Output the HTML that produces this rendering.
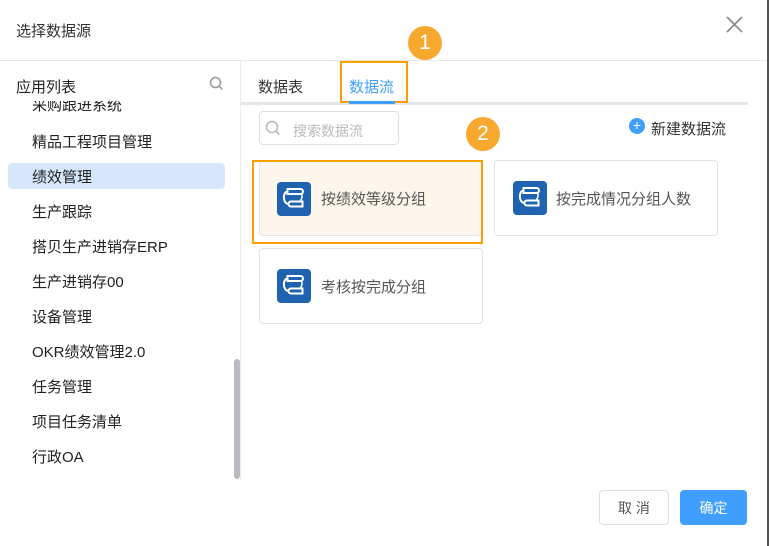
<!DOCTYPE html>
<html><head><meta charset="utf-8"><style>
*{margin:0;padding:0;box-sizing:border-box}
body{width:770px;height:546px;background:#fff;position:relative;overflow:hidden;font-family:"Liberation Sans","Noto Sans CJK SC",sans-serif;color:#333}
.a{position:absolute;white-space:nowrap}
.item{position:absolute;left:32px;font-size:15px;color:#222;line-height:20px}
.card{position:absolute;border:1px solid #e3e3e6;border-radius:4px;background:#fff}
.ic{position:absolute;width:34px;height:34px;background:#1f63b0;border-radius:4px}
.ct{position:absolute;font-size:15px;color:#555;line-height:20px}
.badge{position:absolute;width:34px;height:34px;border-radius:50%;background:#f7a92f;color:#fff;font-size:21px;text-align:center;line-height:34px}
</style></head><body>
<div class="a" style="left:16px;top:20px;font-size:15px;color:#333">选择数据源</div>
<svg class="a" style="left:726px;top:16px" width="17" height="17"><path d="M1 1L16 16M16 1L1 16" stroke="#888" stroke-width="1.6"/></svg>
<div class="a" style="left:0;top:60px;width:768px;height:1px;background:#e8e8ea"></div>
<div class="a" style="left:767px;top:0;width:2px;height:546px;background:#555"></div>
<!-- left panel -->
<div class="a" style="left:240px;top:61px;width:1px;height:420px;background:#ececee"></div>
<div class="a" style="left:16px;top:76px;font-size:15px;color:#222">应用列表</div>
<svg class="a" style="left:209px;top:76px" width="15" height="15"><circle cx="6.5" cy="6.5" r="5" stroke="#999" stroke-width="1.5" fill="none"/><path d="M10.5 10.5L13.5 13.5" stroke="#999" stroke-width="1.5"/></svg>
<div style="position:absolute;left:0;top:101px;width:240px;height:11px;overflow:hidden"><div class="item" style="top:-5px">采购跟进系统</div></div>
<div class="a" style="left:8px;top:163px;width:217px;height:26px;background:#d6e7fb;border-radius:4px"></div>
<div class="item" style="top:133px">精品工程项目管理</div>
<div class="item" style="top:168px">绩效管理</div>
<div class="item" style="top:203px">生产跟踪</div>
<div class="item" style="top:238px">搭贝生产进销存ERP</div>
<div class="item" style="top:273px">生产进销存00</div>
<div class="item" style="top:308px">设备管理</div>
<div class="item" style="top:343px">OKR绩效管理2.0</div>
<div class="item" style="top:378px">任务管理</div>
<div class="item" style="top:413px">项目任务清单</div>
<div class="item" style="top:448px">行政OA</div>
<div class="a" style="left:234px;top:359px;width:6px;height:120px;background:#b9b9bf;border-radius:3px"></div>
<!-- tabs -->
<div class="a" style="left:241px;top:102px;width:507px;height:3px;background:#e4e7ec"></div>
<div class="a" style="left:258px;top:76px;font-size:15px;color:#333">数据表</div>
<div class="a" style="left:340px;top:61px;width:68px;height:42px;border:2px solid #f7a000"></div>
<div class="a" style="left:349px;top:76px;font-size:15px;color:#409eff">数据流</div>
<div class="a" style="left:349px;top:101px;width:46px;height:3px;background:#409eff"></div>
<div class="badge" style="left:408px;top:26px">1</div>
<div class="badge" style="left:466px;top:117px">2</div>
<!-- search -->
<div class="a" style="left:259px;top:111px;width:140px;height:34px;border:1px solid #dcdfe6;border-radius:4px"></div>
<svg class="a" style="left:265px;top:120px" width="16" height="16"><circle cx="7" cy="7" r="5.5" stroke="#bbb" stroke-width="1.6" fill="none"/><path d="M11 11L14.5 14.5" stroke="#bbb" stroke-width="1.6"/></svg>
<div class="a" style="left:293px;top:121px;font-size:14px;color:#bbb">搜索数据流</div>
<div class="a" style="left:629px;top:118px;width:16px;height:16px;border-radius:50%;background:#409eff;color:#fff;font-size:14px;line-height:15px;text-align:center">+</div>
<div class="a" style="left:651px;top:118px;font-size:15px;color:#333">新建数据流</div>
<!-- cards -->
<div class="card" style="left:259px;top:160px;width:223px;height:76px;background:#fdf6ec"></div>
<div class="a" style="left:252px;top:160px;width:231px;height:84px;border:2px solid #f7a000"></div>
<div class="card" style="left:494px;top:160px;width:224px;height:76px"></div>
<div class="card" style="left:259px;top:248px;width:224px;height:76px"></div>
<svg width="0" height="0" style="position:absolute"><defs><g id="fl"><path d="M10.5 7H23.5A2.5 2.5 0 0 1 23.5 12H10.5Z M14 19.5H25.5V24.5H14A2.5 2.5 0 0 1 14 19.5Z" fill="none" stroke="#fff" stroke-width="2"/><path d="M10.5 9.5C5.5 10 5.5 21.5 11.5 22" fill="none" stroke="#fff" stroke-width="2"/><path d="M24 12C26 13 25 17 23 19.5" fill="none" stroke="#fff" stroke-width="1.5"/></g></defs></svg>
<div class="ic" style="left:277px;top:182px"><svg width="34" height="34"><use href="#fl"/></svg></div>
<div class="ct" style="left:321px;top:190px">按绩效等级分组</div>
<div class="ic" style="left:513px;top:181px"><svg width="34" height="34"><use href="#fl"/></svg></div>
<div class="ct" style="left:556px;top:190px">按完成情况分组人数</div>
<div class="ic" style="left:277px;top:269px"><svg width="34" height="34"><use href="#fl"/></svg></div>
<div class="ct" style="left:321px;top:278px">考核按完成分组</div>
<!-- buttons -->
<div class="a" style="left:599px;top:490px;width:70px;height:35px;border:1px solid #dcdfe6;border-radius:4px;text-align:center;line-height:35px;font-size:14px;color:#555">取 消</div>
<div class="a" style="left:680px;top:490px;width:67px;height:35px;background:#409eff;border-radius:4px;text-align:center;line-height:36px;font-size:14px;color:#fff">确定</div>
</body></html>
